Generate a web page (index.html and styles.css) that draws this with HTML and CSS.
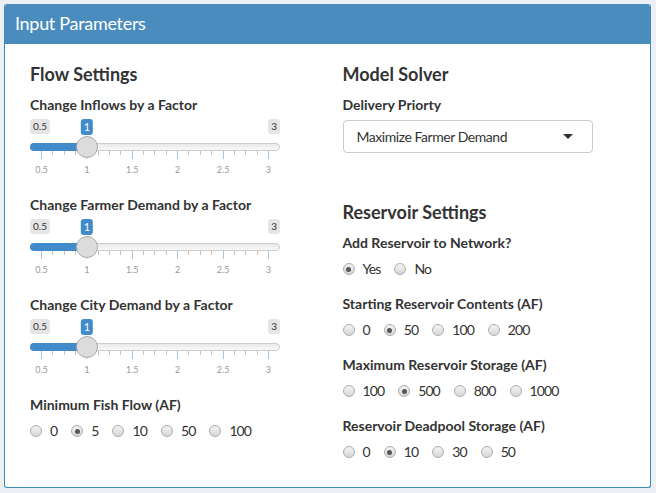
FILE: index.html
```html
<!DOCTYPE html>
<html lang="en">
<head>
<meta charset="utf-8">
<title>Input Parameters</title>
<link rel="stylesheet" href="styles.css">
</head>
<body>
<div class="box">
  <div class="box-header"><h3 class="box-title">Input Parameters</h3></div>
  <div class="box-body">
    <div class="col">
      <h3 class="section">Flow Settings</h3>
      <div class="form-group">
        <label class="control-label">Change Inflows by a Factor</label>
        <div class="slider" style="--p:0.2">
          <div class="irs-labels"><span class="irs-min">0.5</span><span class="irs-max">3</span><span class="irs-single">1</span></div>
          <div class="irs-track"><div class="irs-bar"></div><div class="irs-handle"></div></div>
          <div class="irs-ticks"><i class="big"></i><i></i><i></i><i></i><i class="big"></i><i></i><i></i><i></i><i class="big"></i><i></i><i></i><i></i><i class="big"></i><i></i><i></i><i></i><i class="big"></i><i></i><i></i><i></i><i class="big"></i></div>
          <div class="irs-grid"><span>0.5</span><span>1</span><span>1.5</span><span>2</span><span>2.5</span><span>3</span></div>
        </div>
      </div>
      <div class="form-group">
        <label class="control-label">Change Farmer Demand by a Factor</label>
        <div class="slider" style="--p:0.2">
          <div class="irs-labels"><span class="irs-min">0.5</span><span class="irs-max">3</span><span class="irs-single">1</span></div>
          <div class="irs-track"><div class="irs-bar"></div><div class="irs-handle"></div></div>
          <div class="irs-ticks"><i class="big"></i><i></i><i></i><i></i><i class="big"></i><i></i><i></i><i></i><i class="big"></i><i></i><i></i><i></i><i class="big"></i><i></i><i></i><i></i><i class="big"></i><i></i><i></i><i></i><i class="big"></i></div>
          <div class="irs-grid"><span>0.5</span><span>1</span><span>1.5</span><span>2</span><span>2.5</span><span>3</span></div>
        </div>
      </div>
      <div class="form-group">
        <label class="control-label">Change City Demand by a Factor</label>
        <div class="slider" style="--p:0.2">
          <div class="irs-labels"><span class="irs-min">0.5</span><span class="irs-max">3</span><span class="irs-single">1</span></div>
          <div class="irs-track"><div class="irs-bar"></div><div class="irs-handle"></div></div>
          <div class="irs-ticks"><i class="big"></i><i></i><i></i><i></i><i class="big"></i><i></i><i></i><i></i><i class="big"></i><i></i><i></i><i></i><i class="big"></i><i></i><i></i><i></i><i class="big"></i><i></i><i></i><i></i><i class="big"></i></div>
          <div class="irs-grid"><span>0.5</span><span>1</span><span>1.5</span><span>2</span><span>2.5</span><span>3</span></div>
        </div>
      </div>
      <div class="form-group">
        <label class="control-label">Minimum Fish Flow (AF)</label>
        <div class="radios">
          <span class="radio"><span class="dot"></span>0</span>
          <span class="radio"><span class="dot checked"></span>5</span>
          <span class="radio"><span class="dot"></span>10</span>
          <span class="radio"><span class="dot"></span>50</span>
          <span class="radio"><span class="dot"></span>100</span>
        </div>
      </div>
    </div>
    <div class="col">
      <h3 class="section">Model Solver</h3>
      <div class="form-group">
        <label class="control-label">Delivery Priorty</label>
        <div class="select"><span>Maximize Farmer Demand</span><span class="caret"></span></div>
      </div>
      <h3 class="section section-2">Reservoir Settings</h3>
      <div class="form-group">
        <label class="control-label">Add Reservoir to Network?</label>
        <div class="radios">
          <span class="radio"><span class="dot checked"></span>Yes</span>
          <span class="radio"><span class="dot"></span>No</span>
        </div>
      </div>
      <div class="form-group">
        <label class="control-label">Starting Reservoir Contents (AF)</label>
        <div class="radios">
          <span class="radio"><span class="dot"></span>0</span>
          <span class="radio"><span class="dot checked"></span>50</span>
          <span class="radio"><span class="dot"></span>100</span>
          <span class="radio"><span class="dot"></span>200</span>
        </div>
      </div>
      <div class="form-group">
        <label class="control-label">Maximum Reservoir Storage (AF)</label>
        <div class="radios">
          <span class="radio"><span class="dot"></span>100</span>
          <span class="radio"><span class="dot checked"></span>500</span>
          <span class="radio"><span class="dot"></span>800</span>
          <span class="radio"><span class="dot"></span>1000</span>
        </div>
      </div>
      <div class="form-group">
        <label class="control-label">Reservoir Deadpool Storage (AF)</label>
        <div class="radios">
          <span class="radio"><span class="dot"></span>0</span>
          <span class="radio"><span class="dot checked"></span>10</span>
          <span class="radio"><span class="dot"></span>30</span>
          <span class="radio"><span class="dot"></span>50</span>
        </div>
      </div>
    </div>
  </div>
</div>
</body>
</html>
```
FILE: styles.css
```css
* { box-sizing: border-box; }
html, body { margin: 0; padding: 0; }
body {
  background: #ecf0f5;
  font-family: Lato, "Open Sans", sans-serif;
  color: #333;
  font-size: 14px;
  padding: 4px 5px 0 4px;
}
.box {
  background: #fff;
  border: 1px solid #3c8dbc;
  border-top-color: #4a8cbd;
  border-radius: 3px;
  box-shadow: 0 1px 1px rgba(0,0,0,0.1);
  overflow: hidden;
}
.box-header {
  background: #4a8cbd;
  height: 39px;
  padding: 0 10px 3px;
}
.box-title {
  margin: 0;
  font-weight: 400;
  font-size: 18px;
  letter-spacing: -0.3px;
  line-height: 36px;
  color: #fff;
}
.box-body {
  padding: 10px;
  display: grid;
  grid-template-columns: 1fr 1fr;
}
.col { padding: 0 15px; }
.section {
  margin: 9px 0 10px;
  font-size: 18px;
  line-height: 22px;
  font-weight: 700;
  color: #333;
}
.section-2 { margin-top: 48px; }
.form-group { margin-bottom: 15px; }
.control-label {
  display: block;
  font-weight: 700;
  font-size: 14px;
  line-height: 20px;
}

/* slider */
.slider {
  width: 250px;
  height: 65px;
  padding-top: 4px;
}
.irs-labels {
  position: relative;
  display: flex;
  justify-content: space-between;
  align-items: flex-start;
  height: 16px;
}
.irs-min, .irs-max {
  font-size: 10px;
  line-height: 13px;
  padding: 1px 3px;
  background: rgba(0,0,0,0.1);
  border-radius: 3px;
  color: #333;
}
.irs-single {
  position: absolute;
  top: 0;
  left: calc(11.5px + var(--p) * 227px);
  transform: translateX(-50%);
  font-size: 11px;
  line-height: 14px;
  padding: 1px 3px;
  background: #428bca;
  color: #fff;
  border-radius: 3px;
}
.irs-track {
  position: relative;
  margin-top: 8px;
  height: 8px;
  background: linear-gradient(to bottom, #e2e2e2 -50%, #fff 150%);
  border: 1px solid #ccc;
  border-radius: 16px;
}
.irs-bar {
  height: 8px;
  margin: -1px 0 0 -1px;
  width: calc(12.5px + var(--p) * 227px);
  background: #428bca;
  border-radius: 16px 0 0 16px;
}
.irs-handle {
  position: absolute;
  top: -8px;
  left: calc(-0.5px + var(--p) * 227px);
  width: 22px;
  height: 22px;
  border-radius: 50%;
  background: #dcdcdc;
  border: 1px solid #aaa;
}
.irs-ticks {
  display: flex;
  justify-content: space-between;
  align-items: flex-start;
  padding: 0 11px;
  height: 8px;
}
.irs-ticks i {
  display: block;
  width: 1px;
  height: 4px;
  background: #c4c4c4;
}
.irs-ticks i.big {
  height: 8px;
  background: #a1c5e5;
}
.irs-grid {
  display: flex;
  justify-content: space-between;
  padding: 0 11.5px;
  margin-top: 5px;
  font-size: 9px;
  line-height: 12px;
  color: #999;
}
.irs-grid span {
  width: 0;
  display: flex;
  justify-content: center;
  white-space: nowrap;
}

/* radios */
.radios {
  display: flex;
  gap: 14px;
  margin-top: 6px;
  line-height: 20px;
  font-size: 14px;
  letter-spacing: -0.9px;
}
.radio {
  display: inline-flex;
  align-items: center;
}
.dot {
  position: relative;
  width: 12px;
  height: 12px;
  margin-right: 8px;
  border-radius: 50%;
  border: 1px solid #adadad;
  background: linear-gradient(to bottom, #f4f4f4, #d6d6d6);
}
.dot.checked::after {
  content: "";
  position: absolute;
  left: 2.5px;
  top: 2.5px;
  width: 5px;
  height: 5px;
  border-radius: 50%;
  background: #555;
}

/* select */
.select {
  margin-top: 5px;
  width: 250px;
  height: 33px;
  border: 1px solid #ccc;
  border-radius: 4px;
  display: flex;
  align-items: center;
  padding: 0 19px 0 13px;
  color: #333;
  font-size: 14px;
  letter-spacing: -0.45px;
}
.caret {
  margin-left: auto;
  width: 0;
  height: 0;
  border-left: 5px solid transparent;
  border-right: 5px solid transparent;
  border-top: 5px solid #333;
}
```
